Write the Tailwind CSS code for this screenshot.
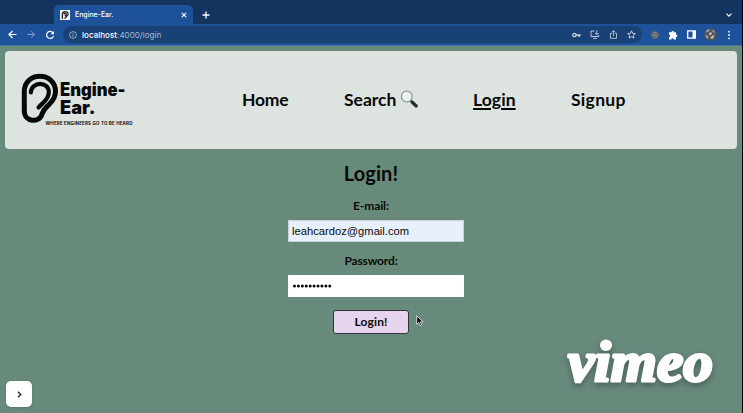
<!DOCTYPE html>
<html lang="en">
<head>
<meta charset="utf-8">
<title>Engine-Ear.</title>
<script src="https://cdn.jsdelivr.net/npm/@tailwindcss/browser@4"></script>
</head>
<body class="w-[743px] h-[413px] overflow-hidden bg-black">
<div class="relative flex flex-col w-[742px] h-[413px] bg-[#688a7b] font-['Lato',sans-serif] text-[#080a09]">
  <!-- Tab strip -->
  <div class="flex h-6 bg-[#14345f] items-end text-white">
    <div class="relative flex items-center w-[139px] h-[19px] ml-[54px] pl-[6px] pr-[6px] rounded-t-[5px] bg-[#1d529b]">
      <svg class="w-[10px] h-[10px] shrink-0" viewBox="0 0 10 10"><rect width="10" height="10" fill="#f4f4f2"/><path d="M2.4 9V4.2C2.4 .8 8.2.7 8.1 4c0 2-2.2 2.500-3.400 4.700M4 4.300c.5-1.600 2.500-1.200 2.200.2-.2.8-.8 1-1.200 1.700" fill="none" stroke="#222" stroke-width="1.300"/></svg>
      <span class="ml-[5px] font-['Inter',sans-serif] text-[7px] tracking-[-0.03px] leading-none font-medium">Engine-Ear.</span>
      <svg class="w-[6px] h-[6px] ml-auto" viewBox="0 0 6 6"><path d="M.8.8l4.400 4.400M5.200.8L.8 5.200" stroke="#fff" stroke-width="1.100"/></svg>
    </div>
    <svg class="w-[8px] h-[8px] ml-[9px] mb-[5px]" viewBox="0 0 8 8"><path d="M4 .5v7M.5 4h7" stroke="#fff" stroke-width="1.300"/></svg>
    <svg class="w-[6px] h-[4px] ml-auto mr-[10px] mb-[7px]" viewBox="0 0 6 4"><path d="M.5.7L3 3.200 5.500.7" fill="none" stroke="#fff" stroke-width="1.100"/></svg>
  </div>
  <!-- Toolbar -->
  <div class="flex items-center h-[22px] bg-[#1d529b] border-b border-[#4376a5] pl-[8px]">
    <svg class="w-[9px] h-[9px]" viewBox="0 0 9 9"><path d="M8.500 4.500H1.200M4.500 1L1 4.500 4.500 8" fill="none" stroke="#fff" stroke-width="1.200"/></svg>
    <svg class="w-[8px] h-[9px] ml-[10px]" viewBox="0 0 8 9"><path d="M.3 4.500h7M4.200 1.300l3.200 3.200-3.200 3.200" fill="none" stroke="#82a3cf" stroke-width="1"/></svg>
    <svg class="w-[10px] h-[10px] ml-[10px]" viewBox="0 0 10 10"><path d="M7.900 2.800A3.500 3.500 0 1 0 8.500 5.800" fill="none" stroke="#fff" stroke-width="1.250"/><path d="M9 .9v3.300H5.700z" fill="#fff"/></svg>
    <div class="flex items-center w-[579px] h-[17px] ml-[8px] rounded-full bg-[#184175] pl-[6px] pr-[6px]">
      <svg class="w-[8px] h-[8px]" viewBox="0 0 8 8"><circle cx="4" cy="4" r="3.400" fill="none" stroke="#b3c2d5" stroke-width=".8"/><path d="M4 3.500v2.400M4 1.900v.9" stroke="#b3c2d5" stroke-width=".9"/></svg>
      <span class="ml-[5px] font-['Inter',sans-serif] text-[8px] tracking-[0.03px] leading-none text-[#a9bbd3] whitespace-nowrap"><span class="text-white font-medium">localhost</span>:4000/login</span>
      <div class="flex items-center ml-auto gap-[9px]">
        <svg class="w-[9px] h-[8px]" viewBox="0 0 9 8"><circle cx="2.400" cy="4" r="1.700" fill="none" stroke="#c8d3e2" stroke-width="1.200"/><path d="M4 4h4.700M7 4v2" stroke="#c8d3e2" stroke-width="1.300"/></svg>
        <svg class="w-[10px] h-[9px]" viewBox="0 0 10 9"><path d="M4.500 1H1v5.500h7.800V5M3 8.300h4" fill="none" stroke="#c8d3e2" stroke-width=".9"/><path d="M6.800.5v4M5 3l1.800 1.800L8.600 3" fill="none" stroke="#c8d3e2" stroke-width=".9"/></svg>
        <svg class="w-[9px] h-[9px]" viewBox="0 0 9 9"><path d="M3 3.300H1.500v5h6v-5H6M4.500 6V.8M2.900 2.200L4.500.6l1.600 1.600" fill="none" stroke="#c8d3e2" stroke-width=".85"/></svg>
        <svg class="w-[9px] h-[9px]" viewBox="0 0 9 9"><path d="M4.500.8l1.100 2.500 2.700.3-2 1.800.6 2.700-2.400-1.400L2.100 8.100l.6-2.700-2-1.800 2.700-.3z" fill="none" stroke="#d5deea" stroke-width=".9"/></svg>
      </div>
    </div>
    <svg class="w-[10px] h-[10px] ml-[8px]" viewBox="0 0 10 10"><circle cx="5" cy="5" r="4.400" fill="#525c6a"/><circle cx="5" cy="5" r="2.600" fill="none" stroke="#8c9197" stroke-width=".8"/><circle cx="5" cy="5" r="1.100" fill="#8c9197"/></svg>
    <svg class="w-[10px] h-[10px] ml-[8px]" viewBox="0 0 10 10"><path d="M1 2.300h2.500a1.250 1.250 0 1 1 2.500 0H8v2.300a1.250 1.250 0 1 1 0 2.500v2.400H5.800a1.200 1.200 0 0 0-2.400 0H1V7a1.200 1.200 0 0 0 0-2.400z" fill="#fff"/></svg>
    <svg class="w-[9px] h-[9px] ml-[9px]" viewBox="0 0 9 9"><rect x=".7" y=".9" width="7.600" height="7.200" fill="none" stroke="#fff" stroke-width="1.300"/><path d="M5.500 1h3v7h-3z" fill="#fff"/></svg>
    <svg class="w-[13px] h-[13px] ml-[8px]" viewBox="0 0 13 13"><circle cx="6.500" cy="6.500" r="6.300" fill="#55565a"/><path d="M2 3l3-2 .5 1.500-3 2zM8 2l2.500 1 .5 2-2-1zM1.500 8l1.500-1 1.500 3-1.500.5z" fill="#a2aaa8"/><path d="M5 5l2-1 1 1.500-1.500 2-1.500-1z" fill="#c2b6b4"/><path d="M6.500 9.500l3-2.500.5 1.500-2 2.500z" fill="#d5d3d3"/></svg>
    <svg class="w-[4px] h-[10px] ml-[10px]" viewBox="0 0 4 10" fill="#fff"><circle cx="2" cy="1.700" r=".9"/><circle cx="2" cy="5" r=".9"/><circle cx="2" cy="8.300" r=".9"/></svg>
  </div>
  <!-- Site header -->
  <header class="flex items-center w-[732px] h-[98px] mt-[5px] ml-[5px] rounded-[4px] bg-[#dde4e0] shrink-0">
    <svg class="w-[116px] h-[56px] ml-[15px]" viewBox="20 71 116 56">
      <path d="M24.300 110V90.500c0-20.300 31.200-20.300 31.200 0 0 5.500-2.500 9-6 12.500-4 4-6 5-7.500 10-2.500 9.500-17.700 8-17.700-3z" fill="none" stroke="#080a09" stroke-width="5"/>
      <path d="M30.800 91.500c.7-11.500 18-11.500 18-.3 0 5-2.500 7.500-5.300 10.300-2 2-3.500 3.200-5 5" fill="none" stroke="#080a09" stroke-width="4.200" stroke-linecap="round"/>
      <text fill="#080a09" font-family="Inter, sans-serif" font-weight="900" font-size="18.300"><tspan x="60" y="95" textLength="65.500" lengthAdjust="spacingAndGlyphs">Engine-</tspan><tspan x="60" y="113" textLength="35.500" lengthAdjust="spacingAndGlyphs">Ear.</tspan></text>
      <text x="45.500" y="123.500" font-family="Inter, sans-serif" font-weight="700" font-size="4.500" textLength="87" fill="#111">WHERE ENGINEERS GO TO BE HEARD</text>
    </svg>
    <nav class="flex items-center ml-[106px] text-[17.500px] font-bold leading-6 whitespace-nowrap">
      <a class="w-[102px] -tracking-[0.2px]">Home</a>
      <a class="w-[129px] flex items-center">Search
        <svg class="w-[18px] h-[18px] ml-[4px] -mt-[3px]" viewBox="0 0 18 18"><path d="M10.500 10.500l2 2" stroke="#777" stroke-width="2"/><path d="M12 12l4.200 4" stroke="#292b2b" stroke-width="3.200" stroke-linecap="round"/><circle cx="6.800" cy="6.500" r="5.400" fill="#eaf1f1" stroke="#8b9495" stroke-width="1.200"/><path d="M3.500 6a3.500 3.500 0 0 1 3-3" fill="none" stroke="#fff" stroke-width="1.200"/></svg>
      </a>
      <a class="w-[98px]"><span class="underline decoration-[1.500px] underline-offset-2 tracking-[0.1px]">Login</span></a>
      <a class="tracking-[0.3px]">Signup</a>
    </nav>
  </header>
  <!-- Login form -->
  <main class="flex flex-col items-center w-[176px] ml-[288px] font-bold">
    <h1 class="mt-[12px] mr-[10px] h-6 w-[166px] text-center text-[20px] leading-6 tracking-[0.1px] whitespace-nowrap">Login!</h1>
    <label class="mt-[13px] mr-[10px] w-[166px] text-center h-4 text-[12px] leading-4 -tracking-[0.1px]">E-mail:</label>
    <div class="mt-[6px] w-[176px] h-[22px] bg-[#e8f0fe] border border-[#c8d2dc] px-[3px] flex items-center font-['Liberation_Sans',sans-serif] font-normal text-[11.200px]">leahcardoz@gmail.com</div>
    <label class="mt-[11px] mr-[10px] w-[166px] text-center h-4 text-[12px] leading-4 -tracking-[0.15px]">Password:</label>
    <div class="mt-[6px] w-[176px] h-[22px] bg-white px-[4.500px] flex items-center">
      <svg class="w-[39px] h-[4px]" viewBox="0 0 39 4"><path d="M1.500 2h37" stroke="#080a09" stroke-width="3" stroke-linecap="round" stroke-dasharray="0 3.920"/></svg>
    </div>
    <button class="mt-[13px] mr-[10px] w-[76px] h-6 rounded-[3px] border border-[#34313a] bg-[#e7d5ee] text-[12px] leading-[22px] tracking-[0.15px]">Login!</button>
  </main>
  <svg class="absolute left-[416px] top-[315px] w-[8px] h-[12px]" viewBox="0 0 8 12"><path d="M.7.8v8.500l2-1.800 1.300 3.200 1.600-.7-1.300-3.100h2.900z" fill="#111" stroke="#dce3df" stroke-width=".9"/></svg>
  <div class="absolute left-[6px] top-[381px] w-[26px] h-[26px] rounded-[5px] bg-white flex items-center justify-center shadow-sm">
    <svg class="w-[5px] h-[7px]" viewBox="0 0 5 7"><path d="M1 .8l2.700 2.700L1 6.200" fill="none" stroke="#222" stroke-width="1.300"/></svg>
  </div>
  <svg class="absolute left-[556px] top-[333px] w-[172px] h-[68px] drop-shadow-[0_3px_3px_rgba(0,0,0,0.3)]" viewBox="556 333 172 68">
    <text x="568" y="381" font-family="Liberation Serif, serif" font-weight="700" font-style="italic" font-size="56" textLength="145" lengthAdjust="spacingAndGlyphs" fill="#fff" stroke="#fff" stroke-width="3" stroke-linejoin="round">vimeo</text>
  </svg>
</div>
</body>
</html>
